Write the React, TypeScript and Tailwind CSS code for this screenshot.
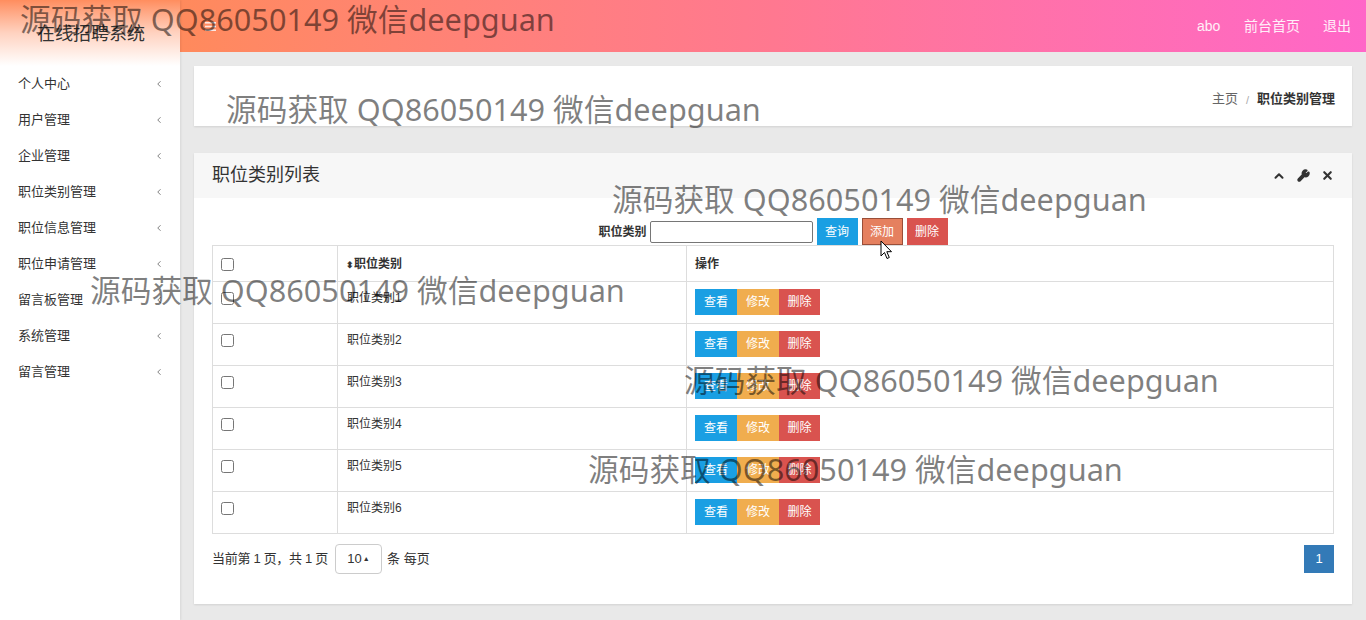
import { ChevronUp, Wrench, X, ChevronLeft } from 'lucide-react'

const menus = [
  '个人中心',
  '用户管理',
  '企业管理',
  '职位类别管理',
  '职位信息管理',
  '职位申请管理',
  '留言板管理',
  '系统管理',
  '留言管理',
]

const rows = [1, 2, 3, 4, 5, 6].map((i) => `职位类别${i}`)

// watermark overlays, placed where the screenshot has them
const marks = [
  { id: 1, className: 'left-[20px] top-[1px]' },
  { id: 2, className: 'left-[226px] top-[91px]' },
  { id: 3, className: 'left-[612px] top-[181px]' },
  { id: 4, className: 'left-[90px] top-[272px]' },
  { id: 5, className: 'left-[684px] top-[362px]' },
  { id: 6, className: 'left-[588px] top-[451px]' },
]

function Sidebar() {
  return (
    <aside className="w-[180px] shrink-0 bg-white shadow-[1px_0_2px_rgba(0,0,0,0.08)] z-10">
      <div className="h-[66px] bg-gradient-to-b from-[#ff8d5e] via-[#ffd2c0] to-white pl-[37px] pt-[22px] text-[18px] leading-[24px] text-[#333]">
        在线招聘系统
      </div>
      <nav>
        {menus.map((m) => (
          <div key={m} className="flex h-9 items-center justify-between pl-[18px] pr-[16px] text-[13px] text-[#333]">
            <span>{m}</span>
            <ChevronLeft size={10} strokeWidth={1.8} className="text-[#555]" />
          </div>
        ))}
      </nav>
    </aside>
  )
}

function Header() {
  return (
    <header className="flex h-[52px] items-center justify-between bg-gradient-to-r from-[#ff8a5c] via-[#ff7890] to-[#ff66c8] pl-[25px] pr-[14px]">
      <svg width="11" height="9" viewBox="0 0 11 9" className="text-white/80">
        <rect x="0" y="0" width="11" height="1.6" fill="currentColor" />
        <rect x="0" y="3.7" width="11" height="1.6" fill="currentColor" />
        <rect x="0" y="7.4" width="11" height="1.6" fill="currentColor" />
      </svg>
      <div className="flex items-center gap-[23px] pr-[1px] text-[14px] text-white/90">
        <span className="w-[24px]">abo</span>
        <span>前台首页</span>
        <span>退出</span>
      </div>
    </header>
  )
}

function ListPanel() {
  return (
    <div className="mt-[27px] bg-white shadow-[0_1px_2px_rgba(0,0,0,0.1)]">
      <div className="flex h-[45px] items-center justify-between bg-[#f7f7f7] pl-[18px] pr-[18px]">
        <h2 className="text-[18px] text-[#333]">职位类别列表</h2>
        <div className="flex items-center gap-[11px] text-[#333]">
          <ChevronUp size={14} strokeWidth={3.5} />
          <Wrench size={13} strokeWidth={3} className="fill-[#333]" />
          <X size={13} strokeWidth={4} />
        </div>
      </div>

      <div className="px-[18px] pb-[30px] pt-[20px]">
        {/* search bar */}
        <div className="flex items-center justify-center">
          <label className="mr-[3px] text-[12px] font-bold text-[#333]">职位类别</label>
          <input className="h-[22px] w-[163px] rounded-[2px] border border-[#767676] bg-white" />
          <button className="ml-[4px] h-[27px] w-[41px] bg-[#1a9fe3] text-[12px] text-white">查询</button>
          <button className="ml-[4px] h-[27px] w-[41px] border border-[#9a4e38] bg-[#e5805f] text-[12px] text-white">添加</button>
          <button className="ml-[4px] h-[27px] w-[41px] bg-[#d9534f] text-[12px] text-white">删除</button>
        </div>

        <table className="w-full border-collapse border border-[#ddd] text-[12px] text-[#333]">
          <thead>
            <tr className="h-[36px]">
              <th className="w-[125px] border border-[#ddd] px-2 text-left align-middle font-normal">
                <input type="checkbox" className="align-middle" />
              </th>
              <th className="w-[349px] border border-[#ddd] px-2 text-left align-middle font-bold">
                <span className="text-[9px]">⬍</span>职位类别
              </th>
              <th className="border border-[#ddd] px-2 text-left align-middle font-bold">操作</th>
            </tr>
          </thead>
          <tbody>
            {rows.map((r) => (
              <tr key={r} className="h-[42px]">
                <td className="border border-[#ddd] px-2 pt-[10px] align-top">
                  <input type="checkbox" />
                </td>
                <td className="border border-[#ddd] px-[9px] pt-[8px] align-top leading-[17px]">{r}</td>
                <td className="border border-[#ddd] px-[8px] py-[7px] align-top">
                  <div className="flex">
                    <button className="h-[26px] w-[42px] bg-[#1a9fe3] text-white">查看</button>
                    <button className="h-[26px] w-[42px] bg-[#f0ad4e] text-white">修改</button>
                    <button className="h-[26px] w-[41px] bg-[#d9534f] text-white">删除</button>
                  </div>
                </td>
              </tr>
            ))}
          </tbody>
        </table>

        {/* pagination */}
        <div className="mt-[10px] flex items-center justify-between">
          <div className="flex items-center text-[13px] text-[#333]">
            <span className="tracking-[-0.3px]">当前第 1 页，共 1 页</span>
            <span className="ml-[7px] mr-[5px] flex h-[30px] w-[47px] items-center justify-center rounded-[4px] border border-[#ccc] text-[13px]">
              10<span className="ml-[1px] text-[7px]">▲</span>
            </span>
            <span>条 每页</span>
          </div>
          <span className="flex h-[28px] w-[30px] items-center justify-center bg-[#337ab7] text-[13px] text-white">1</span>
        </div>
      </div>
    </div>
  )
}

export default function App() {
  return (
    <div className="relative h-[620px] w-[1366px] overflow-hidden bg-[#e9e9e9] font-['Liberation_Sans','Noto_Sans_CJK_SC',sans-serif]">
      <div className="flex h-full">
        <Sidebar />
        <div className="flex-1">
          <Header />
          <main className="px-[14px] pt-[14px]">
            <div className="flex h-[60px] items-end justify-end bg-white pb-[18px] pr-[17px] text-[13px] shadow-[0_1px_2px_rgba(0,0,0,0.1)]">
              <span className="text-[#666]">主页</span>
              <span className="mx-[8px] text-[11px] text-[#aaa]">/</span>
              <span className="font-bold text-[#333]">职位类别管理</span>
            </div>
            <ListPanel />
          </main>
        </div>
      </div>

      {marks.map((m) => (
        <div
          key={m.id}
          className={`pointer-events-none absolute z-20 whitespace-nowrap font-['Noto_Sans','Noto_Sans_CJK_SC',sans-serif] text-[30.7px] leading-[36px] text-black/50 ${m.className}`}
        >
          源码获取 QQ86050149 微信deepguan
        </div>
      ))}

      {/* mouse pointer over the add button */}
      <svg width="13" height="20" viewBox="0 0 13 20" className="pointer-events-none absolute left-[880px] top-[240px] z-30">
        <path d="M1 1 L1 16 L4.5 12.5 L7 18.5 L9.3 17.5 L6.8 11.7 L11.5 11.7 Z" fill="white" stroke="black" strokeWidth="1" strokeLinejoin="round" />
      </svg>
    </div>
  )
}
